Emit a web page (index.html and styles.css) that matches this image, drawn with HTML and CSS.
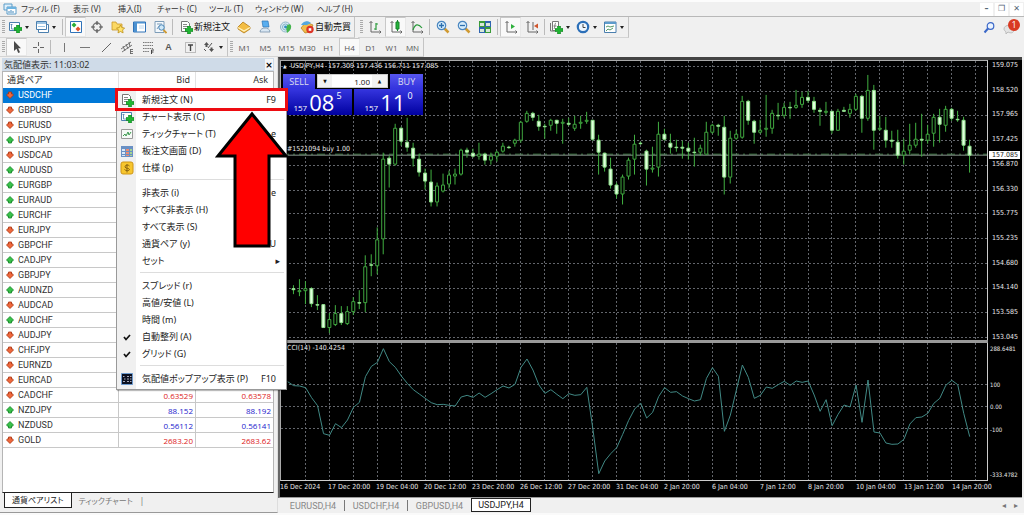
FILE: index.html
```html
<!DOCTYPE html>
<html lang="ja">
<head>
<meta charset="utf-8">
<title>USDJPY,H4</title>
<link rel="stylesheet" href="styles.css">
</head>
<body>
<svg class="sprite" aria-hidden="true">
  <symbol id="plus" viewBox="0 0 8 8"><path d="M2.5 0h3v2.5H8v3H5.500V8h-3V5.500H0v-3h2.500z" fill="#1fb532" stroke="#0d7f1e" stroke-width=".6"/></symbol>
  <symbol id="app" viewBox="0 0 14 14"><path d="M1 2h8v6H1z" fill="#dff0fb" stroke="#5a9cc9"/><path d="M4 5h9v7H4z" fill="#fff" stroke="#5a9cc9"/><path d="M4 5h9v2H4z" fill="#6db3e0"/><path d="M6 11V9M8 11V8M10 11V9" stroke="#4389bd"/></symbol>
  <symbol id="newchart" viewBox="0 0 14 14"><path d="M1.500 2.500h10v8h-10z" fill="#fff" stroke="#4b7fae"/><path d="M3.500 4v5h5M2.500 5l1-1 1 1" fill="none" stroke="#4b7fae" stroke-width=".8"/><use href="#plus" x="6" y="5" width="8" height="8"/></symbol>
  <symbol id="profiles" viewBox="0 0 14 14"><path d="M3.500 4.500h10v8h-10z" fill="#fff" stroke="#4b7fae"/><path d="M1.500 1.500h10v8h-10z" fill="#fff" stroke="#4b7fae"/><path d="M2 2h9v2H2z" fill="#9cc4e4"/><path d="M3 6.500h7" stroke="#9cc4e4"/></symbol>
  <symbol id="market" viewBox="0 0 14 14"><path d="M1.500 1.500h11v11h-11z" fill="#fff" stroke="#2f72b8"/><path d="M5 2.500L7.500 5 5 7.500 2.500 5z" fill="#2aad35"/><path d="M9 6.500L11.500 9 9 11.500 6.500 9z" fill="#e2502c"/></symbol>
  <symbol id="cross" viewBox="0 0 14 14"><circle cx="7" cy="7" r="4" fill="none" stroke="#777" stroke-width="1.500"/><path d="M7 1v4M7 9v4M1 7h4M9 7h4" stroke="#555" stroke-width="1.200"/></symbol>
  <symbol id="navigator" viewBox="0 0 14 14"><path d="M1 2h4l1 2h5v6H1z" fill="#fbd864" stroke="#c9982a" stroke-width=".8"/><path d="M9.500 5l1.300 2.600 2.800.4-2 2 .5 2.900-2.600-1.400L7 12.900 7.500 10l-2-2 2.800-.4z" fill="#ffe36a" stroke="#bd8f1b" stroke-width=".8"/></symbol>
  <symbol id="terminal" viewBox="0 0 14 14"><path d="M1.500 2h12v10h-12z" fill="#fff" stroke="#2f72b8"/><path d="M2 2h3v10H2zM2 2h11v1.500H2z" fill="#4c91d0"/><path d="M7 6h5M7 8h5" stroke="#bdd8ef"/></symbol>
  <symbol id="tester" viewBox="0 0 14 14"><path d="M2 1.500h9v11H2z" fill="#f3f8fc" stroke="#7e9db8"/><path d="M4 4h5M4 9l2-3 2 2" stroke="#7e9db8" fill="none"/><circle cx="8.500" cy="7.500" r="2.700" fill="#cfe8f8" stroke="#4a86b8"/><path d="M10.500 10l3 3" stroke="#cf9a32" stroke-width="1.800"/></symbol>
  <symbol id="order" viewBox="0 0 14 14"><path d="M2.500 1.500h6l2 2v8h-8z" fill="#fff" stroke="#777"/><path d="M4 4.500h4M4 6.500h5M4 8.500h3" stroke="#888"/><use href="#plus" x="6" y="6" width="8" height="8"/></symbol>
  <symbol id="gold" viewBox="0 0 14 14"><path d="M1 7l5-5 7 5v2l-6 4-6-4z" fill="#f3bd43" stroke="#b37a14" stroke-width=".8"/><path d="M1 7.500l6 3.500 6-3.500" fill="none" stroke="#fff3c2" stroke-width="1.200"/></symbol>
  <symbol id="account" viewBox="0 0 14 14"><path d="M4 1h6l1 6H5z" fill="#58aef0" stroke="#2b74b5" stroke-width=".7"/><path d="M2 12c0-3 3-4 5-4s5 1 5 4z" fill="#d9e7f3" stroke="#7893ab" stroke-width=".8"/></symbol>
  <symbol id="signal" viewBox="0 0 14 14"><circle cx="6.500" cy="7" r="5" fill="#dcebf2" stroke="#8fb5c9"/><circle cx="6.500" cy="7" r="3" fill="none" stroke="#7fb3cc"/><path d="M7 7c3-5 6-2 5 1s-3 4-4 5z" fill="#43b649"/><circle cx="6.500" cy="7" r="1.400" fill="#2d8fc0"/></symbol>
  <symbol id="auto" viewBox="0 0 14 14"><path d="M1 8l5-6 7 3-3 7-5 1z" fill="#f0bc4a" stroke="#b37a14" stroke-width=".7"/><path d="M1 5c2-4 7-5 10-2l-4 2z" fill="#54a8de"/><circle cx="10" cy="9.500" r="3.700" fill="#dd3427"/><path d="M8.700 8.200h2.600v2.600H8.700z" fill="#fff"/></symbol>
  <symbol id="bars" viewBox="0 0 14 14"><path d="M3 1.500V12h10M1.500 3L3 1.500 4.500 3M11.500 10.500L13 12l-1.500 1.500" fill="none" stroke="#666"/><path d="M8 3v7M8 4h2M6 9h2" stroke="#2a9a3b" stroke-width="1.200"/></symbol>
  <symbol id="candles" viewBox="0 0 14 14"><path d="M3 1.500V12h10M1.500 3L3 1.500 4.500 3M11.500 10.500L13 12l-1.500 1.500" fill="none" stroke="#666"/><path d="M8.500 0v11" stroke="#16852a"/><path d="M7 2h3v7H7z" fill="#25b33b" stroke="#16852a"/></symbol>
  <symbol id="line" viewBox="0 0 14 14"><path d="M3 1.500V12h10M1.500 3L3 1.500 4.500 3M11.500 10.500L13 12l-1.500 1.500" fill="none" stroke="#666"/><path d="M3 10c2-6 5-7 9-2" fill="none" stroke="#2a9a3b" stroke-width="1.200"/></symbol>
  <symbol id="zoomin" viewBox="0 0 14 14"><path d="M8.500 8.500l4 4" stroke="#cf9a32" stroke-width="2.500"/><circle cx="5.500" cy="5.500" r="4.200" fill="#d5ecfb" stroke="#4a86c0" stroke-width="1.200"/><path d="M5.500 3v5M3 5.500h5" stroke="#2d70b0" stroke-width="1.300"/></symbol>
  <symbol id="zoomout" viewBox="0 0 14 14"><path d="M8.500 8.500l4 4" stroke="#cf9a32" stroke-width="2.500"/><circle cx="5.500" cy="5.500" r="4.200" fill="#d5ecfb" stroke="#4a86c0" stroke-width="1.200"/><path d="M3 5.500h5" stroke="#2d70b0" stroke-width="1.300"/></symbol>
  <symbol id="tiles" viewBox="0 0 14 14"><path d="M1 1h6v6H1zM7 7h6v6H7z" fill="#3a9c38"/><path d="M7 1h6v6H7zM1 7h6v6H1z" fill="#2f65b0"/><path d="M2 3h4v3H2zM8 3h4v3H8zM2 9h4v3H2zM8 9h4v3H8z" fill="#d8e8d8"/></symbol>
  <symbol id="scroll" viewBox="0 0 14 14"><path d="M3 1.500V12h10M1.500 3L3 1.500 4.500 3M11.500 10.500L13 12l-1.500 1.500" fill="none" stroke="#666"/><path d="M7 4l4 2.500L7 9z" fill="#2eb03c"/></symbol>
  <symbol id="shift" viewBox="0 0 14 14"><path d="M3 1.500V12h10M1.500 3L3 1.500 4.500 3M11.500 10.500L13 12l-1.500 1.500M8 2v8" fill="none" stroke="#666"/><path d="M13 3.500L9 6l4 2.500z" fill="#d0552c"/></symbol>
  <symbol id="indicators" viewBox="0 0 14 14"><path d="M3.500 1.500h6v9h-6z" fill="#fff" stroke="#777"/><path d="M1.500 3v8h6M7 3c-1.500 0-1 5-2 6M4.500 6h3" fill="none" stroke="#777"/><use href="#plus" x="6" y="6" width="8" height="8"/></symbol>
  <symbol id="clock" viewBox="0 0 14 14"><circle cx="7" cy="7" r="5.200" fill="#eef7ff" stroke="#2b6fb8" stroke-width="2.200"/><path d="M7 4v3.500h2.500" fill="none" stroke="#444"/></symbol>
  <symbol id="template" viewBox="0 0 14 14"><path d="M1.500 2h11.500v10.500H1.500z" fill="#fff" stroke="#4b7fae"/><path d="M2 2h11v2H2z" fill="#5d9ccc"/><path d="M3 7l2-1 2 1 4-1M3 11l2-2 2 1 3-2" fill="none" stroke="#579b68"/></symbol>
  <symbol id="pointer" viewBox="0 0 14 14"><path d="M4 1v10l2.500-2.300L8.200 13l1.800-.8-1.800-4H11z" fill="#4a4a4a"/></symbol>
  <symbol id="hair" viewBox="0 0 14 14"><path d="M7.500 2v4M7.500 9v4M2 7.500h4M9 7.500h4" stroke="#666"/></symbol>
  <symbol id="vline" viewBox="0 0 14 14"><path d="M7.500 3v9" stroke="#777"/></symbol>
  <symbol id="hline" viewBox="0 0 14 14"><path d="M2 7.500h10" stroke="#777"/></symbol>
  <symbol id="trend" viewBox="0 0 14 14"><path d="M3 12l9-9" stroke="#666"/></symbol>
  <symbol id="channel" viewBox="0 0 14 14"><path d="M1 9l10-7M2 12l10-7M3 6l2 5M6 4l2 5M9 2l1 5M10 9.500h3M10 11.500h3M10 13.500h3M10.500 9v5" stroke="#666" stroke-width=".9" fill="none"/></symbol>
  <symbol id="fibo" viewBox="0 0 14 14"><path d="M2 2.500h10M2 5.500h10M2 8.500h10M2 11.500h6" stroke="#777" stroke-dasharray="1.500 .7"/><path d="M10.500 14V10H13M10.500 12h2" stroke="#444" fill="none"/></symbol>
  <symbol id="tbox" viewBox="0 0 14 14"><path d="M2.500 2.500h10v10h-10z" fill="none" stroke="#888" stroke-dasharray="1 1"/><path d="M5 5h5M7.500 5v6" stroke="#444" stroke-width="1.400"/></symbol>
  <symbol id="shapes" viewBox="0 0 14 14"><path d="M2 5l2.500-3L7 5H5.500v2h-2V5zM7 9h1.500V7.500h2V9H12l-2.500 3z" fill="#555"/><path d="M2 9l2 2M10 3L6 8" stroke="#555"/></symbol>
  <symbol id="search" viewBox="0 0 14 14"><circle cx="8.500" cy="5" r="3.300" fill="#eaf3ff" stroke="#3b68c8" stroke-width="1.200"/><path d="M6 7.500L2.500 11.500" stroke="#3b68c8" stroke-width="2"/></symbol>
  <symbol id="bubble" viewBox="0 0 14 14"><path d="M1 8c0-5 10-5 10 0s-4 4-6 3l-2 2v-2C2 10 1 9 1 8z" fill="#e4e4e4" stroke="#bbb"/></symbol>
  <symbol id="tick" viewBox="0 0 14 14"><path d="M1.500 2.500h11v9h-11z" fill="#f6faf6" stroke="#999"/><path d="M3 9l2-2 1 2 2-4 1 3 2-3" fill="none" stroke="#3c9b50"/></symbol>
  <symbol id="depth" viewBox="0 0 14 14"><path d="M1 2h12v11H1z" fill="#6a90c4"/><path d="M2 5h3v2H2zM2 8h3v2H2zM2 11h3v1H2z" fill="#d9e8f7"/><path d="M6 5h3v2H6zM6 8h3v2H6zM6 11h3v1H6z" fill="#ee8b72"/><path d="M10 5h2v2h-2zM10 8h2v2h-2zM10 11h2v1h-2z" fill="#a5d68f"/></symbol>
  <symbol id="spec" viewBox="0 0 14 14"><rect x="1" y="1" width="12" height="12" rx="2" fill="#f7c62f" stroke="#cf9615"/><path d="M9.500 5c-1-1.500-5-1-4.500 1s4.500 1 4.500 2.500-4 1.500-5 0M7 3v8.500" fill="none" stroke="#8a6510"/></symbol>
  <symbol id="popup" viewBox="0 0 14 14"><path d="M1.500 1.500h11v11h-11z" fill="#0b1020" stroke="#6d9bd0"/><path d="M3 4.500h1.500M4 7h1.500M3 9.500h2M7 4.500h2M7 7h2M7 9.500h2M10 4.500h1.500M10 7h1.500M10 9.500h1.500" stroke="#aab" stroke-width="1.200"/></symbol>
  <symbol id="check" viewBox="0 0 14 14"><path d="M4 7l2 2.500 4-4.500" fill="none" stroke="#111" stroke-width="1.700"/></symbol>
  <symbol id="up" viewBox="0 0 8 8"><path d="M4 .5L7.500 4 6 5.500V5H5.500v2h-3V5H2v.5L.5 4z" fill="#39c24a" stroke="#138327" stroke-width=".8"/></symbol>
  <symbol id="down" viewBox="0 0 8 8"><path d="M4 7.500L.5 4 2 2.500V3h.5V1h3v2H6v-.5L7.500 4z" fill="#f0683c" stroke="#a8330f" stroke-width=".8"/></symbol>
</svg>

<header>
  <nav class="menubar">
    <svg class="icon"><use href="#app"/></svg>
    <div class="menus">
      <button>ファイル (F)</button><button>表示 (V)</button><button>挿入(I)</button><button>チャート (C)</button><button>ツール (T)</button><button>ウィンドウ (W)</button><button>ヘルプ (H)</button>
    </div>
    <div class="winbuttons"><button aria-label="最小化">–</button><button aria-label="元に戻す">❐</button><button aria-label="閉じる">✕</button></div>
  </nav>

  <div class="toolbar main-tools">
    <div class="group">
      <i class="handle"></i>
      <button class="tool drop" aria-label="新規チャート"><svg class="icon"><use href="#newchart"/></svg></button>
      <button class="tool drop" aria-label="組表示"><svg class="icon"><use href="#profiles"/></svg></button>
      <i class="sep"></i>
      <button class="tool on" aria-label="気配値表示"><svg class="icon"><use href="#market"/></svg></button>
      <button class="tool" aria-label="データウィンドウ"><svg class="icon"><use href="#cross"/></svg></button>
      <button class="tool" aria-label="ナビゲーター"><svg class="icon"><use href="#navigator"/></svg></button>
      <button class="tool" aria-label="ターミナル"><svg class="icon"><use href="#terminal"/></svg></button>
      <button class="tool" aria-label="ストラテジーテスター"><svg class="icon"><use href="#tester"/></svg></button>
      <i class="sep"></i>
      <button class="tool wide"><svg class="icon"><use href="#order"/></svg>新規注文</button>
      <button class="tool" aria-label="MetaEditor"><svg class="icon"><use href="#gold"/></svg></button>
      <button class="tool" aria-label="口座"><svg class="icon"><use href="#account"/></svg></button>
      <button class="tool" aria-label="シグナル"><svg class="icon"><use href="#signal"/></svg></button>
      <button class="tool wide"><svg class="icon"><use href="#auto"/></svg>自動売買</button>
    </div>
    <div class="group">
      <i class="handle"></i>
      <button class="tool" aria-label="バーチャート"><svg class="icon"><use href="#bars"/></svg></button>
      <button class="tool on" aria-label="ローソク足"><svg class="icon"><use href="#candles"/></svg></button>
      <button class="tool" aria-label="ラインチャート"><svg class="icon"><use href="#line"/></svg></button>
      <i class="sep"></i>
      <button class="tool" aria-label="拡大"><svg class="icon"><use href="#zoomin"/></svg></button>
      <button class="tool" aria-label="縮小"><svg class="icon"><use href="#zoomout"/></svg></button>
      <button class="tool" aria-label="整列"><svg class="icon"><use href="#tiles"/></svg></button>
      <i class="sep"></i>
      <button class="tool on" aria-label="自動スクロール"><svg class="icon"><use href="#scroll"/></svg></button>
      <button class="tool" aria-label="チャートシフト"><svg class="icon"><use href="#shift"/></svg></button>
      <i class="sep"></i>
      <button class="tool drop" aria-label="インディケータ"><svg class="icon"><use href="#indicators"/></svg></button>
      <button class="tool drop" aria-label="時間足設定"><svg class="icon"><use href="#clock"/></svg></button>
      <button class="tool drop" aria-label="定型チャート"><svg class="icon"><use href="#template"/></svg></button>
    </div>
    <div class="right-tools">
      <button class="tool" aria-label="検索"><svg class="icon"><use href="#search"/></svg></button>
      <button class="tool notice" aria-label="お知らせ"><svg class="icon"><use href="#bubble"/></svg><span class="badge">1</span></button>
    </div>
  </div>

  <div class="toolbar line-tools">
    <div class="group">
      <i class="handle"></i>
      <button class="tool on" aria-label="カーソル"><svg class="icon"><use href="#pointer"/></svg></button>
      <button class="tool" aria-label="クロスヘア"><svg class="icon"><use href="#hair"/></svg></button>
      <i class="sep"></i>
      <button class="tool" aria-label="垂直線"><svg class="icon"><use href="#vline"/></svg></button>
      <button class="tool" aria-label="水平線"><svg class="icon"><use href="#hline"/></svg></button>
      <button class="tool" aria-label="トレンドライン"><svg class="icon"><use href="#trend"/></svg></button>
      <button class="tool" aria-label="チャネル"><svg class="icon"><use href="#channel"/></svg></button>
      <button class="tool" aria-label="フィボナッチ"><svg class="icon"><use href="#fibo"/></svg></button>
      <button class="tool letter">A</button>
      <button class="tool" aria-label="ラベル"><svg class="icon"><use href="#tbox"/></svg></button>
      <button class="tool drop" aria-label="矢印"><svg class="icon"><use href="#shapes"/></svg></button>
    </div>
    <div class="group periods">
      <i class="handle"></i>
      <button class="tool">M1</button><button class="tool">M5</button><button class="tool">M15</button><button class="tool">M30</button><button class="tool">H1</button><button class="tool on">H4</button><button class="tool">D1</button><button class="tool">W1</button><button class="tool">MN</button>
    </div>
  </div>
</header>

<main class="workspace">
  <section class="watch">
    <div class="watch-title"><span>気配値表示: 11:03:02</span><button aria-label="閉じる">×</button></div>
    <div class="watch-body">
      <table class="quotes">
        <thead><tr><th>通貨ペア</th><th>Bid</th><th>Ask</th></tr></thead>
        <tbody id="quotes"></tbody>
      </table>
    </div>
    <div class="watch-tabs"><button class="active">通貨ペアリスト</button><button>ティックチャート</button></div>

    <div class="context" role="menu">
      <button role="menuitem"><svg class="icon"><use href="#order"/></svg><span>新規注文 (N)</span><kbd>F9</kbd></button>
      <button role="menuitem"><svg class="icon"><use href="#newchart"/></svg><span>チャート表示 (C)</span></button>
      <button role="menuitem"><svg class="icon"><use href="#tick"/></svg><span>ティックチャート (T)</span><kbd>e</kbd></button>
      <button role="menuitem"><svg class="icon"><use href="#depth"/></svg><span>板注文画面 (D)</span></button>
      <button role="menuitem"><svg class="icon"><use href="#spec"/></svg><span>仕様 (p)</span></button>
      <hr>
      <button role="menuitem"><i></i><span>非表示 (i)</span><kbd>e</kbd></button>
      <button role="menuitem"><i></i><span>すべて非表示 (H)</span></button>
      <button role="menuitem"><i></i><span>すべて表示 (S)</span></button>
      <button role="menuitem"><i></i><span>通貨ペア (y)</span><kbd>U</kbd></button>
      <button role="menuitem" class="sub"><i></i><span>セット</span></button>
      <hr>
      <button role="menuitem"><i></i><span>スプレッド (r)</span></button>
      <button role="menuitem"><i></i><span>高値/安値 (L)</span></button>
      <button role="menuitem"><i></i><span>時間 (m)</span></button>
      <button role="menuitem"><svg class="icon"><use href="#check"/></svg><span>自動整列 (A)</span></button>
      <button role="menuitem"><svg class="icon"><use href="#check"/></svg><span>グリッド (G)</span></button>
      <hr>
      <button role="menuitem"><svg class="icon"><use href="#popup"/></svg><span>気配値ポップアップ表示 (P)</span><kbd>F10</kbd></button>
    </div>
    <div class="highlight"></div>
    <svg class="arrow" viewBox="0 0 74 139" aria-hidden="true"><path d="M37 4L71 46H54v90H20V46H3z" fill="#f00" stroke="#000" stroke-width="3"/></svg>
  </section>

  <section class="charts">
    <div class="chart">
      <div class="pane price-pane">
        <svg id="price" viewBox="0 0 708 280" preserveAspectRatio="none"></svg>
        <div class="chart-title"><b>▲</b>USDJPY,H4&nbsp; 157.309 157.436 156.711 157.085</div>
        <div class="trade">
          <div class="trade-top">
            <button class="side">SELL</button>
            <div class="volume"><button aria-label="減らす">▼</button><input aria-label="数量" value="1.00"><button aria-label="増やす">▲</button></div>
            <button class="side">BUY</button>
          </div>
          <div class="trade-prices">
            <button><small>157</small><strong>08</strong><sup>5</sup></button>
            <button><small>157</small><strong>11</strong><sup>0</sup></button>
          </div>
        </div>
        <div class="position">#1521094 buy 1.00</div>
      </div>
      <div class="axis prices"><span>159.075</span><span>158.520</span><span>157.965</span><span>157.425</span><span>156.870</span><span>156.330</span><span>155.775</span><span>155.235</span><span>154.680</span><span>154.140</span><span>153.585</span><span>153.045</span><output>157.085</output></div>
      <div class="divider"></div>
      <div class="pane cci-pane">
        <svg id="cci" viewBox="0 0 2124 411" preserveAspectRatio="none"></svg>
        <div class="cci-title">CCI(14) -140.4254</div>
      </div>
      <div class="axis levels"><span>288.6481</span><span>100</span><span>0.00</span><span>-100</span><span>-333.4782</span></div>
      <div class="times"><span>16 Dec 2024</span><span>17 Dec 20:00</span><span>19 Dec 04:00</span><span>20 Dec 12:00</span><span>23 Dec 20:00</span><span>26 Dec 12:00</span><span>27 Dec 20:00</span><span>31 Dec 04:00</span><span>2 Jan 20:00</span><span>6 Jan 04:00</span><span>7 Jan 12:00</span><span>8 Jan 20:00</span><span>10 Jan 04:00</span><span>13 Jan 12:00</span><span>14 Jan 20:00</span></div>
    </div>
    <div class="chart-tabs">
      <button>EURUSD,H4</button><button>USDCHF,H4</button><button>GBPUSD,H4</button><button class="active">USDJPY,H4</button>
      <div class="scrollers"><button aria-label="前へ">◂</button><button aria-label="次へ">▸</button></div>
    </div>
  </section>
</main>
<script src="script.js"></script>
</body>
</html>
```

FILE: styles.css
```css
* { box-sizing: border-box; }
html, body { height: 100%; }
body {
  margin: 0;
  display: flex;
  flex-direction: column;
  background: #f0f0f0;
  border-bottom: 2px solid #fafafa;
  color: #333;
  font: 9px/12px "Noto Sans", "Noto Sans CJK JP", sans-serif;
  font-feature-settings: "palt";
  overflow: hidden;
}
button, input { font: inherit; color: inherit; margin: 0; padding: 0; border: 0; background: none; font-feature-settings: inherit; }
.sprite { position: absolute; width: 0; height: 0; }
.icon { width: 14px; height: 14px; flex: none; display: block; }

.menubar { display: flex; align-items: center; height: 17px; padding-left: 3px; border-top: 2px solid #fcfcfc; border-bottom: 1px solid #b8b8b8; }
.menus { display: grid; grid-template-columns: 52px 45px 39px 52px 46px 62px auto; margin-left: 4px; flex: 1; justify-content: start; }
.menus button { text-align: left; white-space: nowrap; font-size: 8px; }
.winbuttons { display: flex; gap: 2px; padding-right: 1px; }
.winbuttons button { width: 13px; height: 13px; background: #fff; color: #567; font: bold 8px/12px "DejaVu Sans", sans-serif; }

.toolbar { display: flex; }
.main-tools { height: 21px; }
.line-tools { height: 19px; }
.group { display: flex; align-items: stretch; border-right: 1px solid #c4c4c4; border-bottom: 1px solid #d4d4d4; }
.main-tools .group + .group { margin-left: 3px; }
.handle { width: 3px; margin: 3px 1px 3px 2px; background: repeating-linear-gradient(#aaa 0 1px, #f0f0f0 1px 2px); }
.sep { width: 1px; margin: 2px; background: #bbb; }
.tool { width: 21px; display: flex; align-items: center; justify-content: center; white-space: nowrap; }
.tool.on { background: #f9f9f9; border: 1px solid #c8c8c8; border-right-color: #e8e8e8; border-bottom-color: #e8e8e8; }
.tool.drop { width: 27px; justify-content: flex-start; padding-left: 2px; gap: 3px; }
.tool.drop::after { content: ""; border: 2px solid transparent; border-top: 3px solid #222; border-bottom: 0; }
.tool.wide { width: 58px; justify-content: flex-start; padding-left: 4px; gap: 1px; color: #111; }
.tool.letter { font: bold 9px "Liberation Sans", sans-serif; color: #555; }
.periods .tool { font: 8px "Open Sans", sans-serif; color: #555; }
.right-tools { margin-left: auto; display: flex; padding-right: 4px; }
.notice { position: relative; }
.badge { position: absolute; right: 0; top: 2px; width: 12px; height: 12px; border-radius: 50%; background: #d93a22; color: #fff; font: 9px/12px "Open Sans", sans-serif; text-align: center; }

.workspace { flex: 1; min-height: 0; display: flex; }
.watch { position: relative; z-index: 1; width: 278px; flex: none; display: flex; flex-direction: column; padding: 1px 3px 3px 2px; border-right: 1px solid #ddd; border-bottom: 1px solid #999; }
.watch-title { height: 13px; display: flex; justify-content: space-between; align-items: center; padding: 0 1px 0 2px; background: #cfdbe8; }
.watch-title button { width: 8px; height: 11px; background: #f4f6f8; color: #000; font: bold 9px/10px "DejaVu Sans", sans-serif; }
.watch-body { flex: 1; min-height: 0; overflow: hidden; background: #fff; border: 1px solid #b5b5b5; border-bottom: 1px solid #222; }
.quotes { width: 100%; border-collapse: separate; border-spacing: 0; table-layout: fixed; }
.quotes th { height: 16px; padding: 0 5px 0 4px; font-weight: 400; text-align: right; border-right: 1px solid #e2e2e2; }
.quotes th:first-child { width: 116px; text-align: left; }
.quotes th:nth-child(2) { width: 77px; }
.quotes td { height: 15px; padding: 0 2px; line-height: 13px; border-right: 1px solid #c8c8c8; border-bottom: 1px solid #c8c8c8; text-align: right; font-family: "Open Sans", sans-serif; font-size: 8px; }
.quotes td:last-child, .quotes th:last-child { border-right: 0; }
.quotes td:first-child { text-align: left; font-family: Roboto, sans-serif; font-size: 9px; }
.quotes td svg { width: 8px; height: 8px; margin: 0 4px 0 1px; vertical-align: -1px; }
.quotes .selected td { background: #0078d7; border-color: #0078d7; color: #fff; }
.quotes .fall { color: #d22; }
.quotes .rise { color: #22c; }
.watch-tabs { height: 16px; display: flex; align-items: flex-start; padding-left: 2px; }
.watch-tabs button { height: 15px; padding: 0 7px; color: #777; font-size: 8px; }
.watch-tabs button.active { background: #fff; border: 1px solid #222; border-top: 0; color: #222; }
.watch-tabs button:last-child::after { content: "|"; margin-left: 7px; }

.context { position: absolute; left: 116px; top: 31px; width: 171px; padding: 2px 0; border: 1px solid #999; background: linear-gradient(90deg, #f0f0f0 19px, #fff 19px); display: flex; flex-direction: column; box-shadow: 1px 1px 1px #0004; color: #222; }
.context button { height: 17px; display: grid; grid-template-columns: 21px 1fr auto; align-items: center; padding: 0 10px 0 3px; text-align: left; white-space: nowrap; }
.context span { padding-left: 1px; }
.context kbd { font: inherit; }
.context .sub::after { content: "▸"; font-family: "DejaVu Sans", sans-serif; margin-right: -4px; }
.context hr { width: 144px; margin: 3px 2px 4px auto; border: 0; border-top: 1px solid #ddd; }
.highlight { position: absolute; left: 115px; top: 31px; width: 173px; height: 23px; border: 3px solid #ed0c12; z-index: 2; }
.arrow { position: absolute; left: 215px; top: 53px; width: 74px; height: 139px; z-index: 3; }

.charts { flex: 1; min-width: 0; display: flex; flex-direction: column; }
.chart { flex: 1; min-height: 0; margin-right: 2px; display: grid; grid-template-columns: minmax(0, 1fr) 34px; grid-template-rows: minmax(0, 280fr) 3px minmax(0, 138fr) 16px; background: #000; border-top: 3px solid #444; border-left: 2px solid #666; border-bottom: 1px solid #999; color: #e8e8e8; font: 7px/11px "DejaVu Sans Condensed", "DejaVu Sans", sans-serif; }
.pane { position: relative; min-height: 0; border-right: 1px solid #ccc; border-left: 1px solid #aaa; overflow: hidden; }
.price-pane { border-top: 1px solid #aaa; grid-area: 1 / 1; }
.cci-pane { grid-area: 3 / 1; border-bottom: 1px solid #ccc; }
.pane > svg { display: block; width: 100%; height: 100%; }
.grid { stroke: #63666c; stroke-dasharray: 2 2; shape-rendering: crispEdges; }
.grid, .wick, .body, .cci-line, .bid, .open-line { vector-effect: non-scaling-stroke; }
.wick { stroke: #41b041; }
.body { fill: #000; stroke: #3fa53f; }
.body.down { fill: #e0ffdc; stroke: #8fe08c; }
.bid { stroke: #8a9a90; }
.open-line { stroke: #3d7a42; stroke-dasharray: 8 4 2 4; }
.cci-line { fill: none; stroke: #418985; stroke-width: 1; }
.chart-title { position: absolute; left: 2px; top: 0; white-space: pre; }
.chart-title b { font-size: 5px; margin-right: 4px; }
.cci-title { position: absolute; left: 6px; top: 0; }
.position { position: absolute; left: 6px; top: 83px; }
.trade { position: absolute; left: 2px; top: 13px; width: 140px; background: #000; }
.trade-top { display: grid; grid-template-columns: 32px 1fr 33px; gap: 2px; height: 15px; }
.side { background: linear-gradient(#5656ef, #3333dd); color: #dde; font: 9px "Open Sans", sans-serif; }
.volume { display: grid; grid-template-columns: 14px 1fr 15px; margin-bottom: 1px; background: #f2f2f2; color: #111; font-size: 5px; border: 1px solid #ccc; }
.volume input { width: 100%; background: #fff; text-align: right; padding-right: 2px; font: 8px "Open Sans", sans-serif; }
.trade-prices { display: grid; grid-template-columns: 1fr 1fr; gap: 2px; }
.trade-prices button { height: 26px; display: flex; align-items: flex-end; justify-content: center; gap: 2px; background: linear-gradient(#3535df, #0000a0); color: #fff; font-family: "Open Sans", sans-serif; }
.trade-prices small { font-size: 8px; line-height: 15px; }
.trade-prices strong { font-size: 22px; line-height: 26px; font-weight: 400; }
.trade-prices sup { font-size: 9px; line-height: 14px; align-self: flex-start; }
.axis { position: relative; display: flex; flex-direction: column; justify-content: space-between; min-height: 0; padding-left: 4px; white-space: nowrap; }
.prices { grid-area: 1 / 2 / 3; }
.axis output { position: absolute; left: 1px; right: 2px; top: 32%; line-height: 8px; padding-left: 3px; background: #fff; color: #222; }
.divider { grid-area: 2 / 1; background: #999; }
.levels { grid-area: 3 / 2; padding-left: 2px; font-size: 6px; display: grid; grid-template-rows: 36fr 22fr 22fr 45fr 12fr; }
.times { grid-area: 4 / 1 / 5 / 3; display: flex; padding-right: 34px; }
.times span { flex: 0 0 calc(100% * 48 / 708); white-space: nowrap; padding-top: 1px; }
.chart-tabs { height: 15px; display: flex; padding-left: 4px; }
.chart-tabs > button { width: 63px; color: #888; border-right: 1px solid #777; margin-block: 2px; font: 9px/10px Roboto, sans-serif; }
.chart-tabs > button:nth-child(3) { border-right: 0; }
.chart-tabs > button.active { width: 60px; margin: 0 0 1px; background: #fff; border: 1px solid #222; color: #222; }
.scrollers { margin-left: auto; display: flex; gap: 8px; padding-right: 6px; color: #777; font: 8px "DejaVu Sans", sans-serif; }
```

FILE: script.js
```js
const NS = "http://www.w3.org/2000/svg";

function add(parent, name, attrs) {
  const el = document.createElementNS(NS, name);
  for (const key in attrs) el.setAttribute(key, attrs[key]);
  parent.appendChild(el);
}

// Market watch: symbol, direction, bid, ask
const quotes = [
  ["USDCHF", "down"], ["GBPUSD", "down"], ["EURUSD", "down"], ["USDJPY", "up"],
  ["USDCAD", "down"], ["AUDUSD", "up"], ["EURGBP", "up"], ["EURAUD", "up"],
  ["EURCHF", "up"], ["EURJPY", "down"], ["GBPCHF", "down"], ["CADJPY", "up"],
  ["GBPJPY", "down"], ["AUDNZD", "up"], ["AUDCAD", "down"], ["AUDCHF", "up"],
  ["AUDJPY", "down"], ["CHFJPY", "down"], ["EURNZD", "down"], ["EURCAD", "down"],
  ["CADCHF", "down", "0.63529", "0.63578"], ["NZDJPY", "up", "88.152", "88.192"],
  ["NZDUSD", "up", "0.56112", "0.56141"], ["GOLD", "down", "2683.20", "2683.62"]
];
document.getElementById("quotes").innerHTML = quotes.map(([name, dir, bid = "", ask = ""], i) => {
  const tone = dir === "up" ? "rise" : "fall";
  return `<tr${i ? "" : ' class="selected"'}><td><svg><use href="#${dir}"/></svg>${name}</td><td class="${tone}">${bid}</td><td class="${tone}">${ask}</td></tr>`;
}).join("");

// Candles: high, body top, body bottom, low; a trailing d marks a falling candle
const candles = `285 288 290 294d,279 290 292 296,281 288 291 304,287 288 304 307d,295 304 305 310d,304 304 328 328d,
313 319 328 333,305 313 325 326,306 313 323 325d,306 311 324 325,297 301 312 315,290 302 303 309d,255 266 303 312,
254 264 265 276d,227 239 266 274,152 158 239 254,155 157 164 187d,123 127 164 165,126 127 141 145d,117 141 147 151d,
142 147 158 166d,153 158 172 176d,168 172 181 189d,169 181 202 206d,182 185 202 206,173 184 191 192,170 174 184 188,
168 173 176 184,148 149 174 175,147 149 152 157d,148 152 156 157d,142 153 156 159,152 153 160 164d,152 155 160 164,
150 151 156 161,142 145 151 152,145 146 147 148d,138 139 143 146,120 121 140 142,110 112 121 122,111 112 117 120d,
114 120 126 130d,123 125 126 138d,118 119 125 130,119 119 123 133d,118 121 123 143,117 122 124 125d,115 123 128 130,
115 121 123 128,111 119 121 123,119 119 139 140d,134 139 152 174d,152 152 167 171d,157 168 185 188d,182 184 194 198d,
174 176 194 204,157 159 176 179,134 143 159 174,141 142 143 144d,149 150 169 185d,146 167 169 172,121 133 167 176,
128 133 139 140d,133 142 147 153d,139 146 147 151d,140 146 148 158d,142 147 151 159d,137 151 152 166d,144 147 152 155,
121 131 154 154,123 124 132 133,123 124 126 135d,115 126 177 194d,130 137 177 183,129 133 138 139,95 100 137 138,
99 100 120 124d,119 120 132 143d,119 129 132 133,94 127 129 136,109 112 128 133,102 114 115 119d,102 106 115 117,
101 106 107 118d,89 104 107 108,91 96 104 107,90 96 100 102d,96 100 109 112d,107 109 111 125d,101 110 112 114,
110 110 130 133d,108 110 130 130,106 109 111 111d,103 108 113 117,93 95 109 110,94 95 118 132d,74 89 118 120,
84 89 130 149d,115 127 129 130,116 129 140 147d,130 139 141 147d,129 141 155 158d,138 150 155 164,123 144 150 154,
122 138 145 147,113 138 140 156d,124 133 140 143,113 116 133 146,108 116 124 142d,105 108 125 131,107 108 118 120d,
110 118 119 121d,116 119 145 150d,139 145 155 172d`.split(",");

const price = document.getElementById("price");
for (let i = 0; i < 29; i++) add(price, "path", { class: "grid", d: `M${24.5 + 24 * i} 0V280` });
for (let i = 0; i < 12; i++) add(price, "path", { class: "grid", d: `M0 ${Math.round(5 + 24.73 * i) + 0.5}H708` });
add(price, "path", { class: "open-line", d: "M0 93.500H708" });
add(price, "path", { class: "bid", d: "M0 94.500H708" });
candles.forEach((row, i) => {
  const [high, top, bottom, low] = row.trim().split(" ").map(v => parseInt(v, 10) - 60);
  const x = 12.5 + 6 * i;
  add(price, "path", { class: "wick", d: `M${x} ${high}V${low}` });
  add(price, "rect", { class: row.endsWith("d") ? "body down" : "body", x: x - 1.5, y: top + 0.5, width: 3, height: Math.max(bottom - top - 1, 0.5) });
});

// CCI(14), one reading per candle, in the pane's own units
const cci = [140, 152, 153, 158, 188, 212, 296, 301, 266, 278, 255, 217, 202, 125, 94, 82, 41, 80, 97, 123, 145, 164, 177,
  190, 203, 209, 208, 211, 213, 186, 181, 187, 174, 187, 176, 164, 153, 159, 148, 97, 72, 105, 150, 175, 164, 178, 191,
  176, 181, 179, 157, 280, 416, 378, 356, 338, 298, 256, 222, 204, 249, 232, 185, 158, 172, 170, 183, 191, 198, 194,
  130, 98, 124, 289, 240, 165, 90, 127, 190, 181, 156, 160, 149, 139, 151, 138, 142, 138, 180, 229, 194, 272, 238, 210,
  216, 150, 262, 135, 291, 294, 324, 328, 327, 313, 267, 248, 246, 235, 205, 190, 151, 136, 149, 235, 305];
const pane = document.getElementById("cci");
for (let i = 0; i < 29; i++) add(pane, "path", { class: "grid", d: `M${73.5 + 72 * i} 0V411` });
for (const y of [124.5, 190.5, 256.5]) add(pane, "path", { class: "grid", d: `M0 ${y}H2124` });
add(pane, "polyline", { class: "cci-line", points: cci.map((v, i) => `${20 + 18 * i},${v - 24}`).join(" ") });
```
